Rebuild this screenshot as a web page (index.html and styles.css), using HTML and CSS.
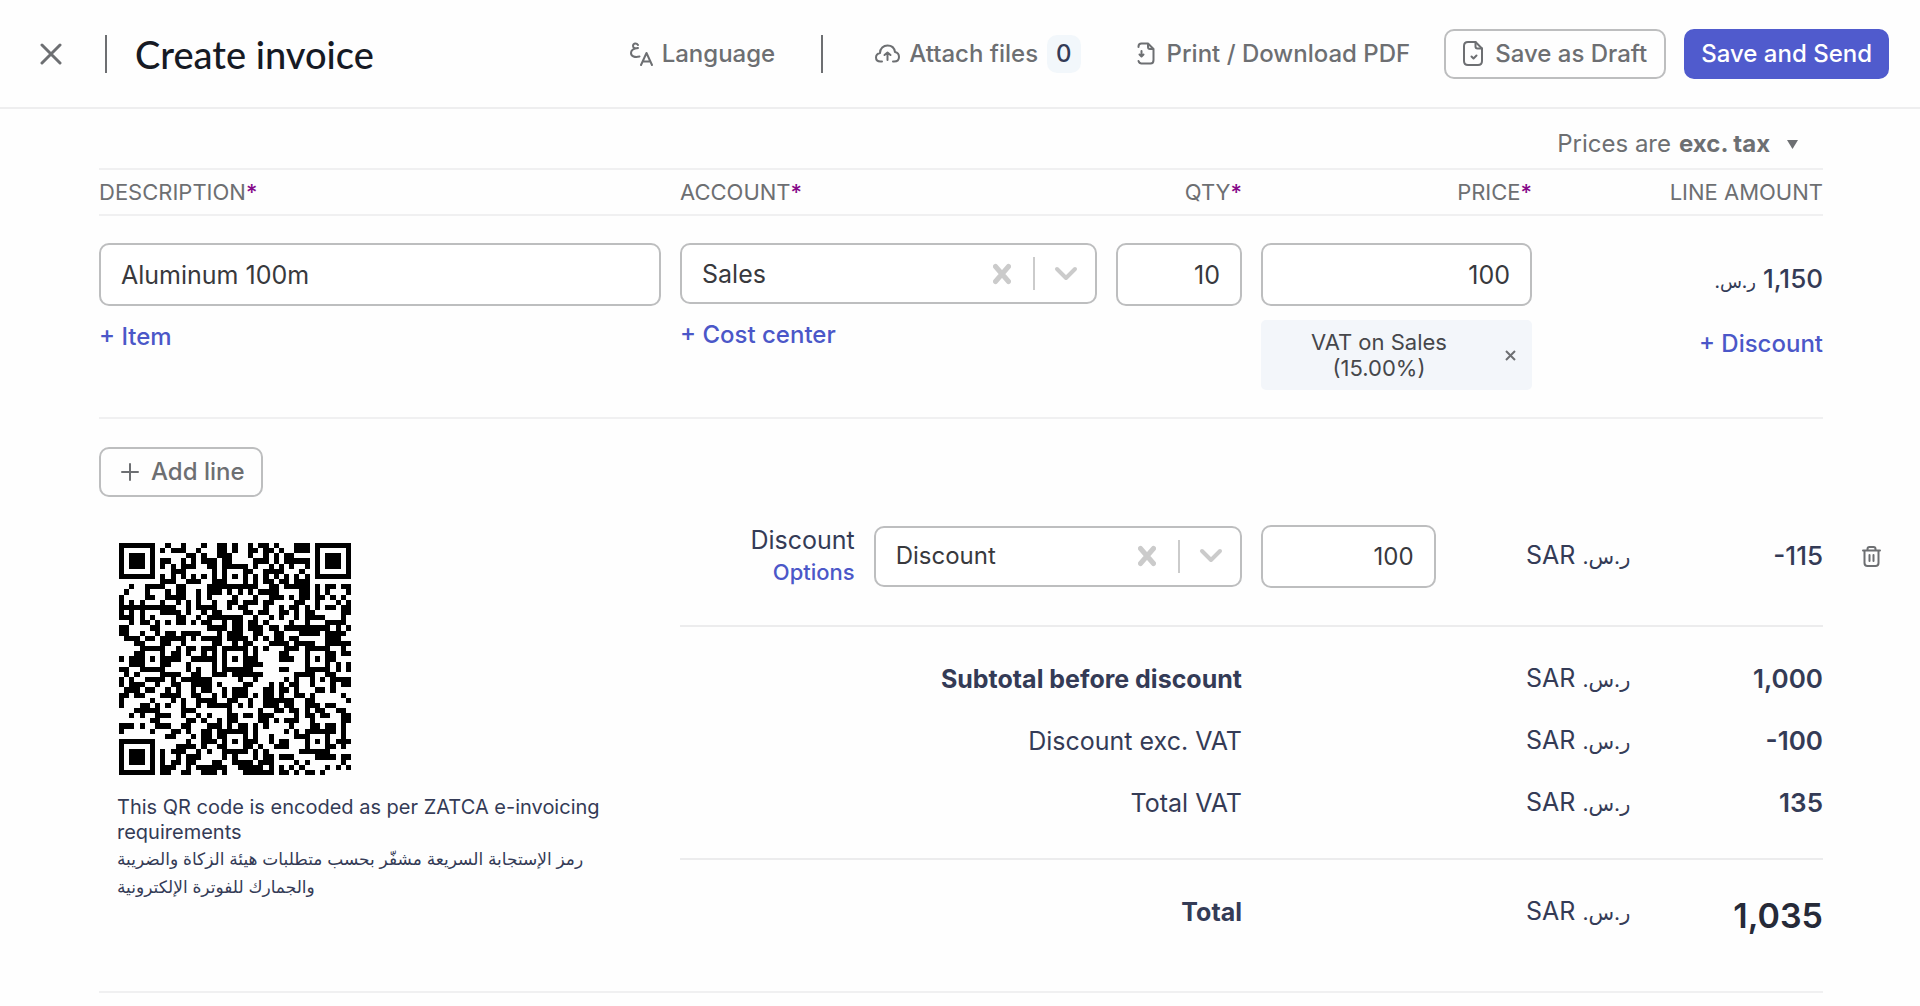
FILE: index.html
```html
<!DOCTYPE html>
<html lang="en">
<head>
    <meta charset="UTF-8">
    <meta name="viewport" content="width=device-width, initial-scale=1.0">
    <title>Create invoice</title>
    <link rel="stylesheet" href="styles.css">
</head>
<body>
    <header class="topbar">
        <button class="icon-btn" type="button" aria-label="Close">
            <svg width="22" height="22" viewBox="0 0 22 22"><path d="M2 2L20 20M20 2L2 20" fill="none" stroke="currentColor" stroke-width="3" stroke-linecap="round"/></svg>
        </button>
        <span class="bar"></span>
        <h1>Create invoice</h1>
        <div class="actions">
            <button class="action" type="button">
                <svg width="23" height="24" viewBox="0 0 23 24" fill="none" stroke="currentColor" stroke-width="2" stroke-linecap="round" stroke-linejoin="round"><path d="M8 3C6.500 0.500 3 1 3 4C3 6 5 6.800 8 6C3.500 6.500 1 8 1 11C1 14.500 5 15.500 9.500 14.500"/><path d="M11 23L16.500 11L22 23M13 19.500H20"/></svg>
                Language
            </button>
            <span class="bar"></span>
            <button class="action attach" type="button">
                <svg width="25" height="20" viewBox="0 0 25 20" fill="none" stroke="currentColor" stroke-width="2" stroke-linecap="round" stroke-linejoin="round"><path d="M7 17.500H5.500C3 17.500 1 16 1 13.500C1 11 2.800 9.500 5 9C5 4.500 8.500 1.500 12.500 1.500C17 1.500 19.500 4.500 20 8C22.500 8.500 24 10 24 13C24 16 22 17.500 19 17.500H18"/><path d="M12.500 16V9M9.500 11L12.500 8.500L15.500 11"/></svg>
                Attach files
                <span class="badge">0</span>
            </button>
            <button class="action print" type="button">
                <svg width="18" height="23" viewBox="0 0 18 23" fill="none" stroke="currentColor" stroke-width="2" stroke-linecap="round" stroke-linejoin="round"><path d="M1.500 5V4.500C1.500 2.500 2.500 1.500 4.500 1.500H11L16.500 7V18C16.500 20 15.500 21.500 13.500 21.500H4.500C3 21.500 2 20.500 1.500 19"/><path d="M11 2V5C11 6.200 11.800 7 13 7H16M4.500 9V14M2.500 12.500L4.500 14.500L6.500 12.500"/></svg>
                Print / Download PDF
            </button>
            <button class="btn" type="button">
                <svg width="20" height="25" viewBox="0 0 20 25" fill="none" stroke="currentColor" stroke-width="2" stroke-linecap="round" stroke-linejoin="round"><path d="M5 1H12.500L19 7.500V20C19 22.500 17.500 24 15 24H5C2.500 24 1 22.500 1 20V5C1 2.500 2.500 1 5 1Z"/><path d="M12.500 1V5.500C12.500 6.800 13.200 7.500 14.500 7.500H19M8.500 15.500L10.500 17.500L13.500 14.500"/></svg>
                Save as Draft
            </button>
            <button class="btn primary" type="button">Save and Send</button>
        </div>
    </header>

    <main class="page">
        <div class="tax-mode">
            <label for="taxMode">Prices are</label>
            <select id="taxMode"><option>exc. tax</option></select>
            <svg width="11" height="9" viewBox="0 0 11 9"><path d="M0 0H11L5.500 9Z" fill="currentColor"/></svg>
        </div>

        <table class="lines">
            <thead>
                <tr>
                    <th>DESCRIPTION<b>*</b></th>
                    <th>ACCOUNT<b>*</b></th>
                    <th class="num">QTY<b>*</b></th>
                    <th class="num">PRICE<b>*</b></th>
                    <th class="num">LINE AMOUNT</th>
                </tr>
            </thead>
            <tbody>
                <tr>
                    <td>
                        <input class="field" type="text" value="Aluminum 100m" aria-label="Description">
                        <a class="add-link" href="#">+ Item</a>
                    </td>
                    <td>
                        <div class="field picker">
                            <select aria-label="Account"><option>Sales</option></select>
                            <button type="button" aria-label="Clear account"><svg width="18" height="22" viewBox="0 0 18 22"><path d="M2.500 3.500L15.500 18.500M15.500 3.500L2.500 18.500" fill="none" stroke="currentColor" stroke-width="5" stroke-linecap="round"/></svg></button>
                            <span class="sep"></span>
                            <svg width="24" height="16" viewBox="0 0 24 16"><path d="M3 3L12 12L21 3" fill="none" stroke="currentColor" stroke-width="4" stroke-linecap="round" stroke-linejoin="round"/></svg>
                        </div>
                        <a class="add-link" href="#">+ Cost center</a>
                    </td>
                    <td><input class="field num" type="text" value="10" aria-label="Quantity"></td>
                    <td>
                        <input class="field num" type="text" value="100" aria-label="Price">
                        <div class="tax-chip">
                            <span>VAT on Sales (15.00%)</span>
                            <button type="button" aria-label="Remove tax"><svg width="11" height="11" viewBox="0 0 11 11"><path d="M1 1L10 10M10 1L1 10" fill="none" stroke="currentColor" stroke-width="2"/></svg></button>
                        </div>
                    </td>
                    <td class="line-amount">
                        <p><bdi dir="rtl">ر.س.</bdi> 1,150</p>
                        <a class="add-link" href="#">+ Discount</a>
                    </td>
                </tr>
            </tbody>
        </table>

        <button class="btn add-line" type="button">
            <svg width="18" height="18" viewBox="0 0 18 18"><path d="M9 1V17M1 9H17" fill="none" stroke="currentColor" stroke-width="2" stroke-linecap="round"/></svg>
            Add line
        </button>

        <div class="bottom">
            <section class="zatca">
                <svg class="qr" id="qr" viewBox="0 0 45 45" shape-rendering="crispEdges" role="img" aria-label="ZATCA QR code"></svg>
                <p>This QR code is encoded as per ZATCA e-invoicing requirements</p>
                <p class="arabic" lang="ar">رمز الإستجابة السريعة مشفّر بحسب متطلبات هيئة الزكاة والضريبة<br>والجمارك للفوترة الإلكترونية</p>
            </section>

            <section class="summary">
                <div class="discount-row">
                    <div class="discount-label">
                        <label for="discountAccount">Discount</label>
                        <a href="#">Options</a>
                    </div>
                    <div class="field picker">
                        <select id="discountAccount"><option>Discount</option></select>
                        <button type="button" aria-label="Clear discount"><svg width="18" height="22" viewBox="0 0 18 22"><path d="M2.500 3.500L15.500 18.500M15.500 3.500L2.500 18.500" fill="none" stroke="currentColor" stroke-width="5" stroke-linecap="round"/></svg></button>
                        <span class="sep"></span>
                        <svg width="24" height="16" viewBox="0 0 24 16"><path d="M3 3L12 12L21 3" fill="none" stroke="currentColor" stroke-width="4" stroke-linecap="round" stroke-linejoin="round"/></svg>
                    </div>
                    <input class="field num" type="text" value="100" aria-label="Discount amount">
                    <span class="currency">SAR <bdi dir="rtl">ر.س.</bdi></span>
                    <span class="amount medium">-115</span>
                    <button class="icon-btn trash" type="button" aria-label="Delete discount">
                        <svg width="19" height="21" viewBox="0 0 19 21" fill="none" stroke="currentColor" stroke-width="2" stroke-linecap="round"><path d="M1 4.500H18M5.500 4V3C5.500 1.800 6.300 1 7.500 1H11.500C12.700 1 13.500 1.800 13.500 3V4M2.500 5V17C2.500 19 3.500 20 5.500 20H13.500C15.500 20 16.500 19 16.500 17V5M7.500 9V15M11.500 9V15"/></svg>
                    </button>
                </div>

                <table class="totals">
                    <tbody>
                        <tr>
                            <th class="strong">Subtotal before discount</th>
                            <td class="currency">SAR <bdi dir="rtl">ر.س.</bdi></td>
                            <td class="amount">1,000</td>
                        </tr>
                        <tr>
                            <th>Discount exc. VAT</th>
                            <td class="currency">SAR <bdi dir="rtl">ر.س.</bdi></td>
                            <td class="amount">-100</td>
                        </tr>
                        <tr>
                            <th>Total VAT</th>
                            <td class="currency">SAR <bdi dir="rtl">ر.س.</bdi></td>
                            <td class="amount">135</td>
                        </tr>
                    </tbody>
                    <tfoot>
                        <tr>
                            <th class="strong">Total</th>
                            <td class="currency">SAR <bdi dir="rtl">ر.س.</bdi></td>
                            <td class="amount grand">1,035</td>
                        </tr>
                    </tfoot>
                </table>
            </section>
        </div>
    </main>
    <script src="qr.js"></script>
</body>
</html>
```

FILE: styles.css
```css
* {
    box-sizing: border-box;
}
body {
    margin: 0;
    background: #fefefe;
    color: #343b56;
    font-family: Inter, "DejaVu Sans", sans-serif;
    font-size: 25px;
    line-height: 32px;
}
button, input, select {
    font: inherit;
    color: inherit;
    margin: 0;
}
button {
    background: none;
    border: 0;
    padding: 0;
    cursor: pointer;
}
a {
    color: #4b57c8;
    text-decoration: none;
}
p {
    margin: 0;
}
svg {
    display: block;
    flex: none;
}
select {
    appearance: none;
    background: none;
    border: 0;
    padding: 0;
    outline: none;
}
.num {
    text-align: right;
}

/* top bar */
.topbar {
    display: flex;
    align-items: center;
    min-height: 109px;
    padding: 0 31px 0 40px;
    border-bottom: 2px solid #eeeeef;
    color: #6d6f72;
}
.topbar h1 {
    margin: 0 0 0 28px;
    color: #161a24;
    font-family: Lato, sans-serif;
    font-size: 38px;
    font-weight: 500;
    line-height: 48px;
}
.icon-btn {
    color: #6d6f72;
}
.bar {
    width: 2px;
    height: 38px;
    background: #6d6f72;
}
.icon-btn + .bar {
    margin-left: 43px;
}
.actions {
    display: flex;
    align-items: center;
    margin-left: auto;
}
.action, .btn {
    display: flex;
    align-items: center;
    font-size: 24px;
    font-weight: 500;
    white-space: nowrap;
}
.action {
    gap: 9px;
}
.actions .bar {
    margin: 0 52px 0 46px;
}
.print {
    gap: 12px;
    margin: 0 34px 0 56px;
}
.badge {
    padding: 3px 9px;
    border-radius: 10px;
    background: #f2f7fb;
    color: #343b56;
}
.btn {
    gap: 12px;
    height: 50px;
    padding: 0 17px;
    border: 2px solid #bdbebf;
    border-radius: 10px;
    color: #6d6f72;
}
.primary {
    margin-left: 18px;
    padding: 0 15px;
    border-color: #505bcd;
    background: #505bcd;
    color: #fff;
}

/* invoice lines */
.page {
    padding: 0 97px 0 99px;
}
.tax-mode {
    display: flex;
    justify-content: flex-end;
    align-items: center;
    padding: 19px 25px 8px;
    color: #6d6f72;
    font-size: 24px;
}
.tax-mode select {
    margin: 0 16px 0 8px;
    font-weight: 700;
}
.lines, .lines thead, .lines tbody,
.totals, .totals tbody, .totals tfoot {
    display: block;
}
.lines tr {
    display: grid;
    grid-template-columns: 562fr 417fr 126fr 271fr 272fr;
    gap: 19px;
}
.lines th, .lines td, .totals th, .totals td {
    padding: 0;
    min-width: 0;
}
.lines thead {
    padding: 6px 0;
    border-top: 2px solid #f0f0f1;
    border-bottom: 2px solid #f0f0f1;
    color: #6d6f72;
}
.lines th {
    font-size: 22px;
    font-weight: 400;
    text-align: left;
}
.lines th.num {
    text-align: right;
}
.lines th b {
    color: #860b8a;
    font-weight: 500;
}
.lines tbody {
    padding: 27px 0;
    border-bottom: 2px solid #f0f0f1;
}
.field {
    display: block;
    width: 100%;
    height: 63px;
    padding: 0 20px;
    border: 2px solid #bdbebf;
    border-radius: 10px;
    background: #fff;
    color: #38393d;
    outline: none;
}
.picker {
    display: flex;
    align-items: center;
    height: 61px;
    padding-right: 17px;
    color: #cbcbcb;
}
.picker select {
    flex: 1;
    min-width: 0;
    color: #38393d;
}
.sep {
    width: 2px;
    height: 33px;
    margin: 0 19px 0 22px;
    background: #cbcbcb;
}
.add-link {
    display: block;
    margin-top: 15px;
    font-size: 24px;
    font-weight: 500;
}
.tax-chip {
    display: flex;
    align-items: center;
    margin-top: 14px;
    padding: 9px 16px;
    border-radius: 5px;
    background: #f3f6fa;
    color: #46474b;
    font-size: 22px;
    line-height: 26px;
    text-align: center;
}
.tax-chip span {
    flex: 1;
    padding-right: 24px;
}
.tax-chip button {
    color: #6d6f72;
}
.lines .line-amount {
    padding-top: 20px;
    font-size: 26px;
    font-weight: 500;
    text-align: right;
}
.line-amount bdi {
    font-size: 18px;
}
.line-amount .add-link {
    margin-top: 30px;
}
.add-line {
    margin-top: 28px;
    padding: 0 16px 0 20px;
}

/* bottom part */
.bottom {
    display: grid;
    grid-template-columns: 562fr 1143fr;
    gap: 19px;
    padding-top: 27px;
    border-bottom: 2px solid #f0f0f1;
}
.zatca {
    padding: 19px 20px 0 18px;
    font-size: 20px;
    line-height: 25px;
}
.qr {
    width: 232px;
    height: 232px;
    margin: 0 0 20px 2px;
}
.arabic {
    font-size: 17px;
    line-height: 28px;
}
.discount-row, .totals tr {
    display: grid;
    grid-template-columns: 175fr 369fr 175fr 176fr 174fr;
    column-gap: 19px;
    align-items: center;
}
.discount-row {
    grid-template-columns: 175fr 369fr 175fr 176fr 174fr 39px;
    margin-right: -58px;
    padding-bottom: 37px;
}
.discount-row select, .discount-row input {
    font-size: 24px;
}
.discount-label {
    text-align: right;
}
.discount-label a {
    display: block;
    font-size: 22px;
    font-weight: 500;
}
.trash {
    justify-self: end;
}
.totals {
    border-top: 2px solid #ececed;
}
.totals tbody {
    padding: 21px 0 24px;
}
.totals tr {
    min-height: 62px;
}
.totals th {
    grid-column: span 2;
    font-weight: 400;
    text-align: right;
}
.totals .currency {
    grid-column: span 2;
}
.totals .strong {
    font-weight: 700;
}
.currency, .amount {
    text-align: right;
    white-space: nowrap;
}
bdi {
    font-size: 21px;
}
.amount {
    font-size: 26px;
    font-weight: 600;
}
.medium {
    font-weight: 500;
}
.totals tfoot {
    padding: 21px 0 48px;
    border-top: 2px solid #ececed;
}
.totals .grand {
    padding-top: 8px;
    color: #262a38;
    font-size: 34px;
}
```

FILE: qr.js
```js
// 45x45 modules (version 7): finder, alignment and timing patterns plus data
const SIZE = 45;
const FINDERS = [[0, 0], [38, 0], [0, 38]];
const ALIGNS = [[22, 6], [6, 22], [22, 22], [38, 22], [22, 38], [38, 38]];
let seed = 1035;

function dataBit() {
    seed = (seed * 1103515245 + 12345) % 2147483648;
    return (seed >> 16) & 1;
}

function moduleAt(x, y) {
    const bit = dataBit();
    for (const [fx, fy] of FINDERS) {
        const d = Math.max(Math.abs(x - fx - 3), Math.abs(y - fy - 3));
        if (d <= 4) return d !== 2 && d !== 4;
    }
    for (const [ax, ay] of ALIGNS) {
        const d = Math.max(Math.abs(x - ax), Math.abs(y - ay));
        if (d <= 2) return d !== 1;
    }
    if (x === 6 || y === 6) return (x + y) % 2 === 0;
    return bit === 1;
}

let path = "";
for (let y = 0; y < SIZE; y++) {
    for (let x = 0; x < SIZE; x++) {
        if (moduleAt(x, y)) path += `M${x} ${y}h1v1h-1z`;
    }
}
const dots = document.createElementNS("http://www.w3.org/2000/svg", "path");
dots.setAttribute("d", path);
document.getElementById("qr").appendChild(dots);
```
